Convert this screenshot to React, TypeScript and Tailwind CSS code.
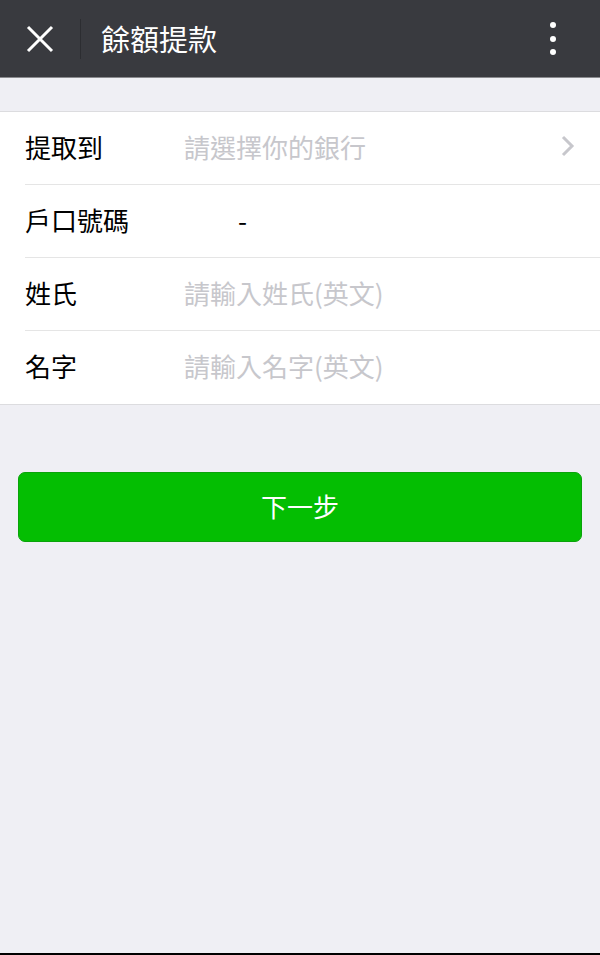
import React from 'react';

const font = { fontFamily: '"Noto Sans CJK TC", "Noto Sans", sans-serif' };

function Row({ label, children, last }: { label: string; children?: React.ReactNode; last?: boolean }) {
  return (
    <div className="pl-[25px]">
      <div className={`flex items-center h-[73px] pb-[4px] ${last ? '' : 'border-b border-[#e5e5e5]'}`}>
        <div className="w-[159px] shrink-0 text-[26px] text-black">{label}</div>
        <div className="flex-1 flex items-center text-[26px]">{children}</div>
      </div>
    </div>
  );
}

export default function App() {
  return (
    <div className="w-[600px] h-[955px] bg-[#efeff4] flex flex-col" style={font}>
      {/* Header */}
      <div className="h-[78px] bg-[#393a3f] flex items-center shrink-0 border-b border-[#8a8a8e]">
        <div className="w-[80px] flex items-center justify-center">
          <svg width="28" height="28" viewBox="0 0 28 28" className="-ml-[1px]">
            <path d="M2 2 L26 26 M26 2 L2 26" stroke="white" strokeWidth="3" />
          </svg>
        </div>
        <div className="w-px h-[40px] bg-[#2c2d31]" />
        <div className="ml-[20px] text-[29px] text-white flex-1 leading-none pb-[1px]">餘額提款</div>
        <div className="w-[50px] flex flex-col items-center gap-[7.5px] mr-[22px]">
          <div className="w-[6px] h-[6px] rounded-full bg-white" />
          <div className="w-[6px] h-[6px] rounded-full bg-white" />
          <div className="w-[6px] h-[6px] rounded-full bg-white" />
        </div>
      </div>

      {/* Form */}
      <div className="mt-[33px] bg-white border-y border-[#dcdcdf]">
        <Row label="提取到">
          <span className="text-[#c7c7cc] flex-1">請選擇你的銀行</span>
          <svg width="16" height="24" viewBox="0 0 16 24" className="mr-[24px]">
            <path d="M3 3 L12 12 L3 21" fill="none" stroke="#c7c7cc" strokeWidth="3" />
          </svg>
        </Row>
        <Row label="戶口號碼">
          <span className="ml-[54px] text-black">-</span>
        </Row>
        <Row label="姓氏">
          <span className="text-[#c7c7cc]">請輸入姓氏(英文)</span>
        </Row>
        <Row label="名字" last>
          <span className="text-[#c7c7cc]">請輸入名字(英文)</span>
        </Row>
      </div>

      {/* Button */}
      <div className="px-[18px] mt-[67px]">
        <button className="w-full h-[70px] rounded-[7px] bg-[#04be02] border border-[#0aa30a] text-white text-[26px] flex items-center justify-center pb-[3px]">
          下一步
        </button>
      </div>

      <div className="flex-1" />
      <div className="h-[2px] bg-black shrink-0" />
    </div>
  );
}
